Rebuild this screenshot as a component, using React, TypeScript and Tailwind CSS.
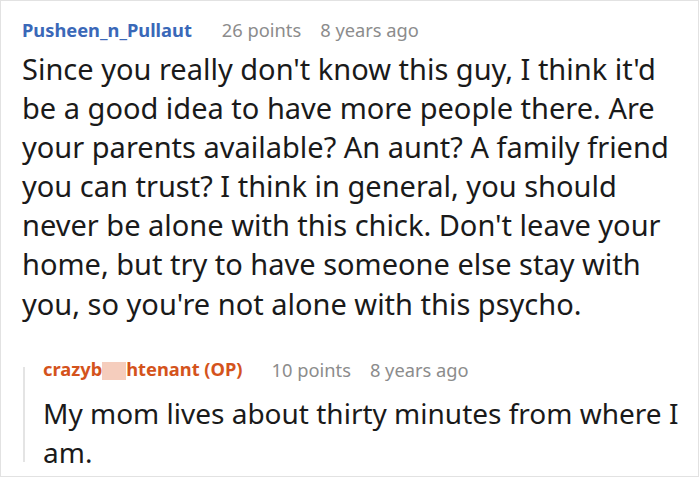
import React from "react";

export default function App() {
  const font = { fontFamily: '"Noto Sans", "Open Sans", sans-serif' };
  return (
    <div className="w-[700px] h-[478px] bg-white overflow-hidden" style={font}>
      <div className="w-[699px] h-[477px] border border-[#e2e2e2] pl-[21px] pr-[4px]">
        <div className="flex items-center h-[40px] pt-[19px] text-[18.3px] leading-none">
          <span className="font-bold text-[#3a68b8]">Pusheen_n_Pullaut</span>
          <span className="ml-[30px] text-[#8c8c8c]">26 points</span>
          <span className="ml-[19px] text-[#8c8c8c]">8 years ago</span>
        </div>
        <p className="mt-[8px] text-[29px] leading-[39.1px] text-[#1a1a1a]">
          Since you really don't know this guy, I think it'd be a good idea to have more people there. Are your parents available? An aunt? A family friend you can trust? I think in general, you should never be alone with this chick. Don't leave your home, but try to have someone else stay with you, so you're not alone with this psycho.
        </p>
        <div className="mt-[33px] flex">
          <div className="w-[2px] bg-[#e4e4e4] mt-[11px] mb-[10px] ml-[1px] shrink-0"></div>
          <div className="pl-[18px]">
            <div className="flex items-center h-[28px] text-[18.3px] leading-none">
              <span className="font-bold text-[#d4531c]">
                crazyb<span className="inline-block w-[24px] h-[18px] align-middle bg-[#f5cdbd]"></span>htenant (OP)
              </span>
              <span className="ml-[29px] text-[#8c8c8c]">10 points</span>
              <span className="ml-[19px] text-[#8c8c8c]">8 years ago</span>
            </div>
            <p className="mt-[10px] text-[28px] leading-[39px] text-[#1a1a1a]">
              My mom lives about thirty minutes from where I am.
            </p>
          </div>
        </div>
      </div>
    </div>
  );
}
